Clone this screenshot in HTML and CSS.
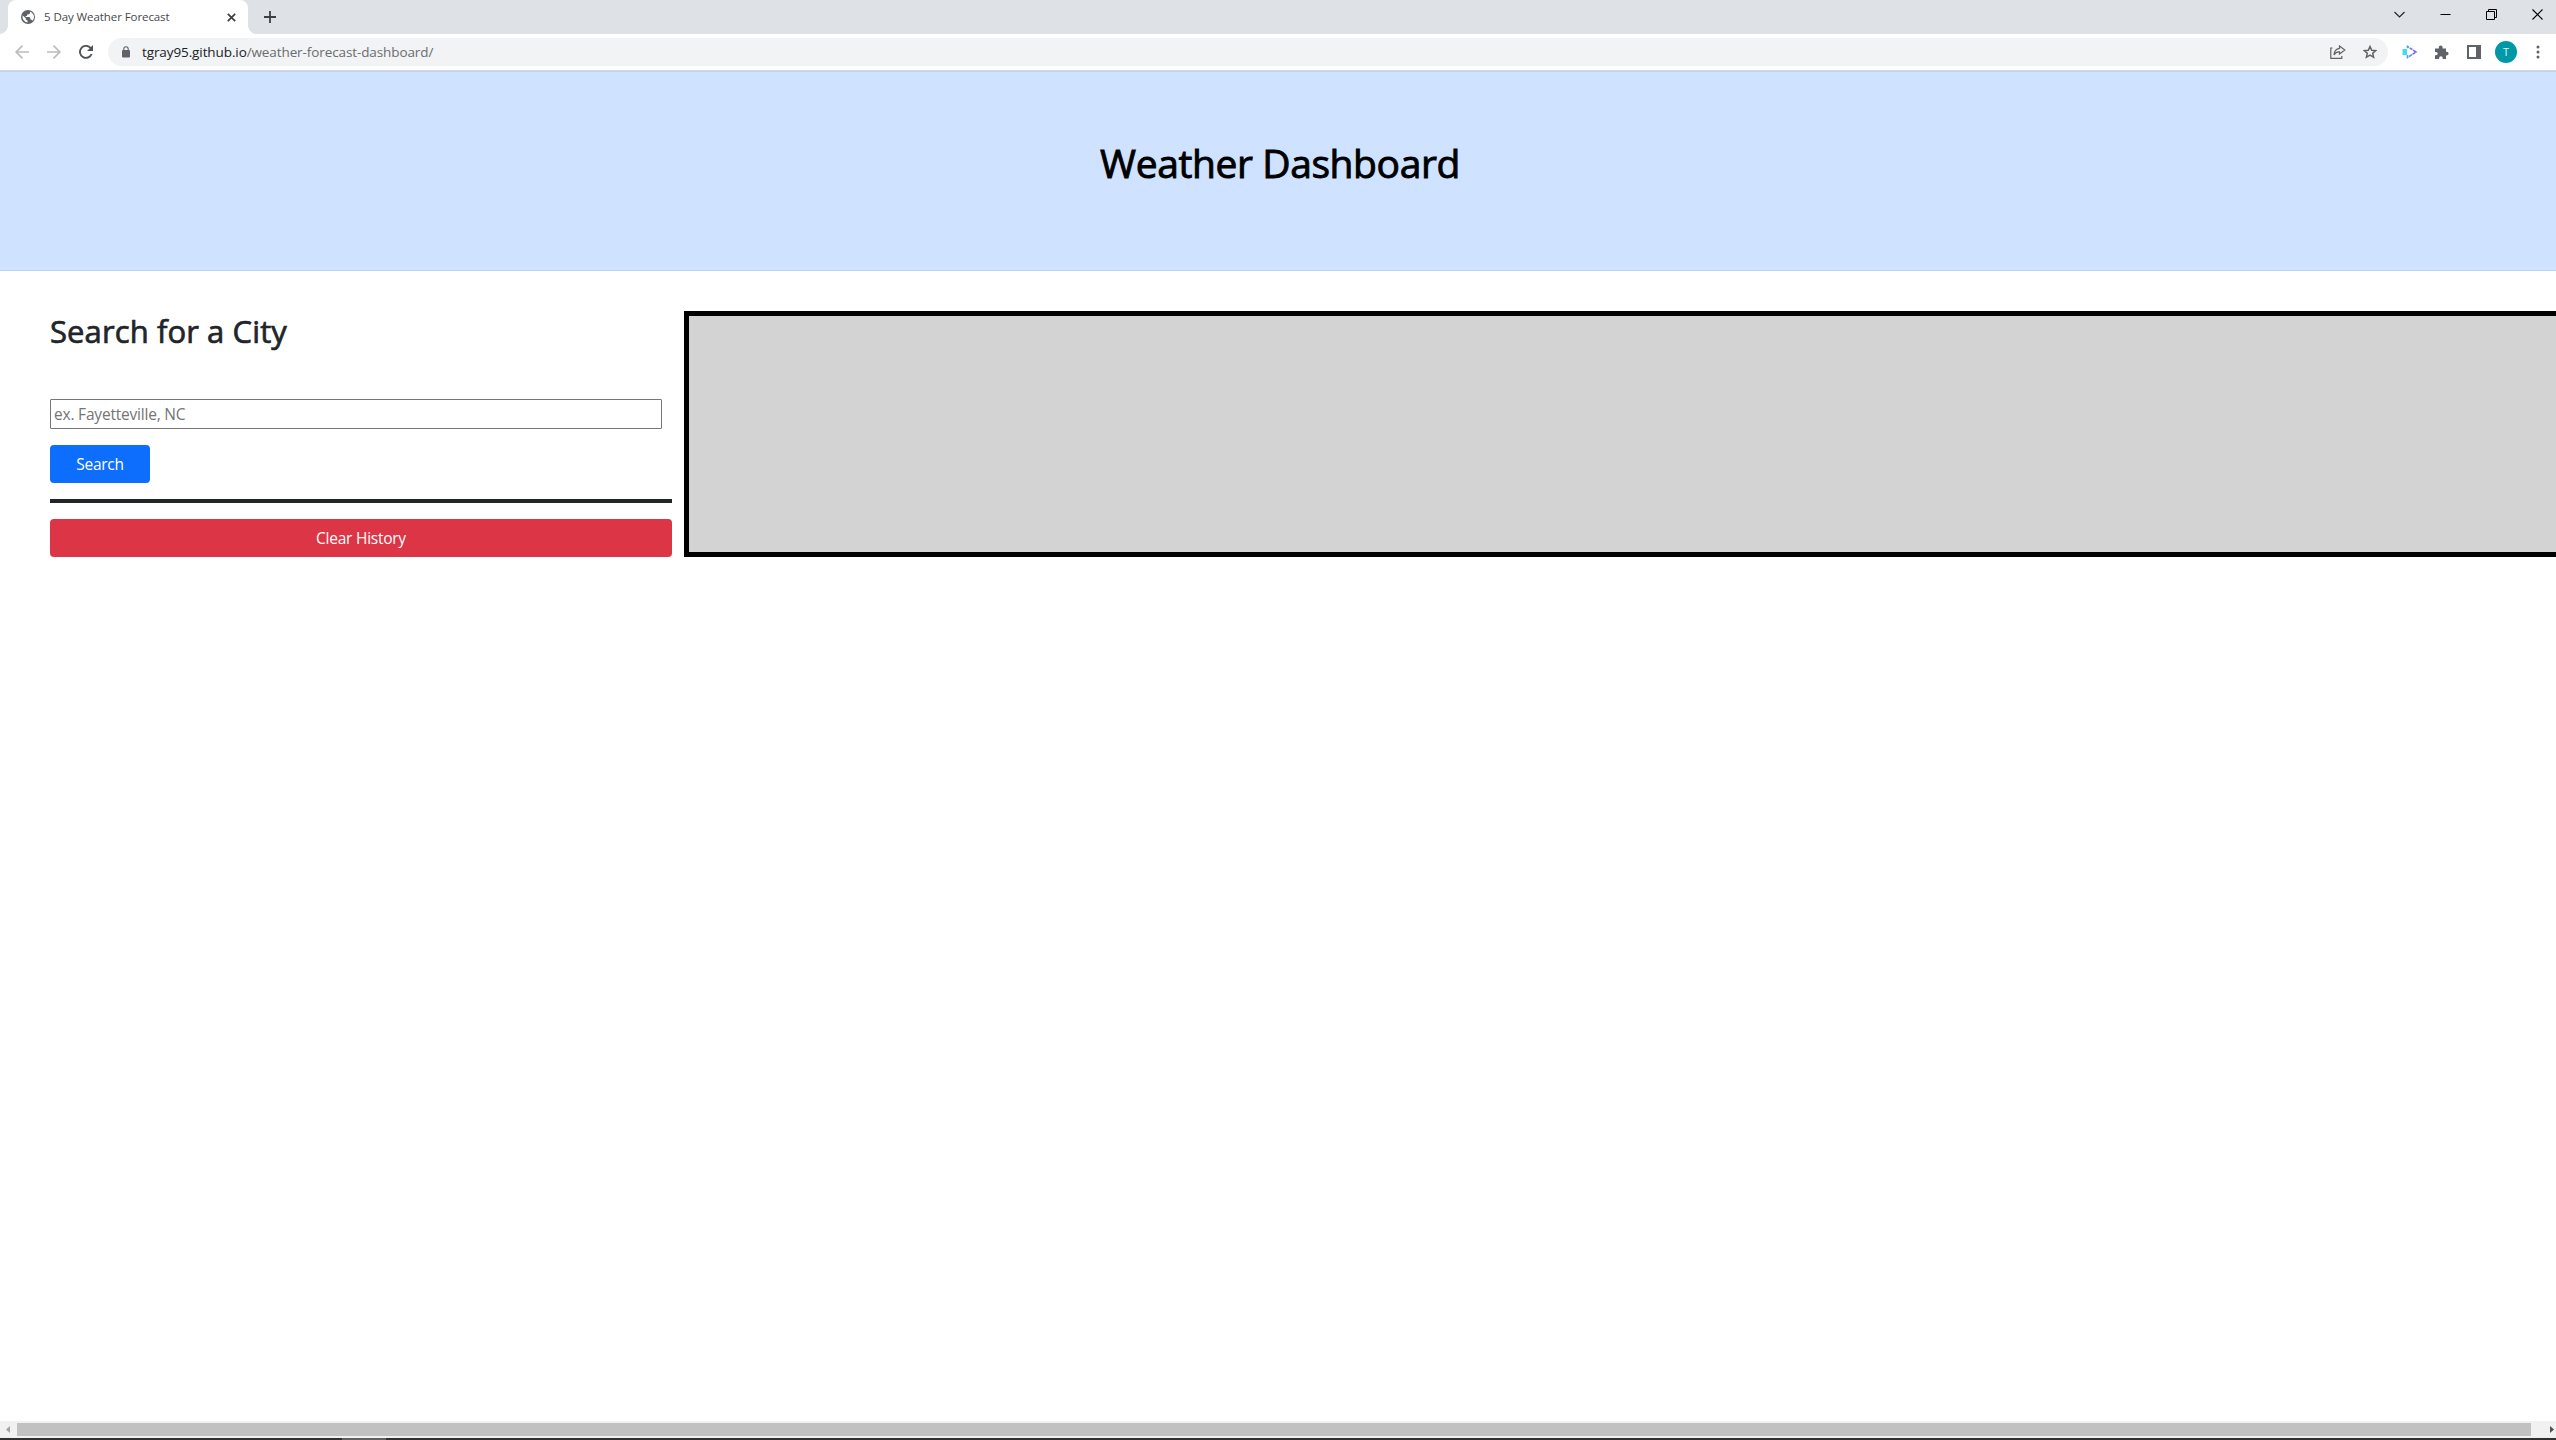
FILE: index.html
```html
<!DOCTYPE html>
<html lang="en">
<head>
<meta charset="utf-8">
<title>5 Day Weather Forecast</title>
<link rel="stylesheet" href="styles.css">
</head>
<body>
<div class="tabstrip">
  <div class="tab">
    <svg class="globe" width="14" height="14" viewBox="0 0 14 14"><circle cx="7" cy="7" r="7" fill="#5f6368"/><path d="M1.700 5.500 4.800 8.200v1.200l1.700 1v2.100A5.600 5.600 0 0 1 1.700 5.500ZM9 1.800v1.500L7.500 4.600H6v1.500H4.700v1h3.700l1 1v1.600h1.400l.8 1a5.500 5.500 0 0 0-2.600-8.900Z" fill="#fff"/></svg>
    <span class="tab-title">5 Day Weather Forecast</span>
    <svg class="tab-close" width="9" height="9" viewBox="0 0 9 9"><path d="m.8.8 7.400 7.400M8.200.8.8 8.200" stroke="#3c4043" stroke-width="1.700"/></svg>
  </div>
  <svg class="new-tab" width="12" height="12" viewBox="0 0 12 12"><path d="M6 0v12M0 6h12" stroke="#3c4043" stroke-width="1.800"/></svg>
  <div class="window-controls">
    <svg width="11" height="11" viewBox="0 0 11 11"><path d="m.5 3 5 5 5-5" fill="none" stroke="#222" stroke-width="1.100"/></svg>
    <svg width="11" height="11" viewBox="0 0 11 11"><path d="M.5 5.500h10" stroke="#000"/></svg>
    <svg width="11" height="11" viewBox="0 0 11 11"><path d="M.5 2.500h8v8h-8zM2.500 2.500v-2h8v8h-2" fill="none" stroke="#000"/></svg>
    <svg width="11" height="11" viewBox="0 0 11 11"><path d="m.5.5 10 10M10.500.5l-10 10" stroke="#000" stroke-width="1.100"/></svg>
  </div>
</div>
<div class="toolbar">
  <div class="nav">
    <svg width="14" height="14" viewBox="0 0 14 14"><path d="M14 7H1.300M7.500.7 1.200 7l6.300 6.300" fill="none" stroke="#babcbe" stroke-width="1.700"/></svg>
    <svg width="14" height="14" viewBox="0 0 14 14"><path d="M0 7h12.700M6.500.7 12.800 7l-6.300 6.300" fill="none" stroke="#babcbe" stroke-width="1.700"/></svg>
    <svg width="14" height="14" viewBox="0 0 14 14"><path d="M12.600 9A6 6 0 1 1 11.300 2.700L12 3.500" fill="none" stroke="#505459" stroke-width="1.900"/><path d="M14 0v6H8Z" fill="#505459"/></svg>
  </div>
  <div class="omnibox">
    <svg class="lock" width="8" height="12" viewBox="0 0 8 12"><rect y="4" width="8" height="7.500" rx="1" fill="#5f6368"/><path d="M1.800 4.500V2.900a2.200 2.200 0 0 1 4.400 0v1.600" fill="none" stroke="#5f6368" stroke-width="1.100"/></svg>
    <span class="url"><b>tgray95.github.io</b>/weather-forecast-dashboard/</span>
    <svg class="share" width="16" height="14" viewBox="0 0 16 14"><path d="M2.500 3H.8v10.400h11V11" fill="none" stroke="#5f6368" stroke-width="1.200"/><path d="M9.500 1 14.800 5l-5.300 4V6.800C7 6.600 5 7.800 4 10c.2-3.600 2-6.200 5.500-6.700Z" fill="none" stroke="#5f6368" stroke-width="1.200"/></svg>
    <svg class="star" width="14" height="14" viewBox="0 0 14 14"><path d="m7 1.500 1.700 3.700 4 .4-3 2.700.9 4L7 10.200l-3.600 2.100.9-4-3-2.700 4-.4Z" fill="none" stroke="#5f6368" stroke-width="1.500"/></svg>
  </div>
  <div class="extensions">
    <svg class="ext" width="16" height="14" viewBox="0 0 16 14"><defs><linearGradient id="beam"><stop stop-color="#4b9af5"/><stop offset="1" stop-color="#8b50ee"/></linearGradient></defs><path d="M.5 4H5v6H.5z" fill="#3bdff5"/><path d="M5.500 10v2.500L14 7 5.500 1.500V4" fill="none" stroke="url(#beam)" stroke-width="1.500" stroke-dasharray="3.500 .7"/></svg>
    <svg class="puzzle" width="15" height="15" viewBox="0 0 15 15"><path d="M1 3.500h3.800V2.300a1.900 1.900 0 0 1 3.800 0v1.200H12v3.300h.8a1.800 1.800 0 0 1 0 3.600H12V14H8.700v-1a1.800 1.800 0 0 0-3.600 0v1H1v-3.700h1a1.700 1.700 0 0 0 0-3.400H1Z" fill="#5f6368"/></svg>
    <svg class="panel-icon" width="14" height="14" viewBox="0 0 14 14"><path d="M1 1h12v12H1z" fill="none" stroke="#5f6368" stroke-width="2"/><path d="M9 0h5v14H9z" fill="#5f6368"/></svg>
    <span class="avatar">T</span>
    <svg class="more" width="4" height="14" viewBox="0 0 4 14"><g fill="#5f6368"><circle cx="2" cy="2" r="1.500"/><circle cx="2" cy="7" r="1.500"/><circle cx="2" cy="12" r="1.500"/></g></svg>
  </div>
</div>
<main class="page">
  <header class="banner"><h1>Weather Dashboard</h1></header>
  <div class="content">
    <section class="search">
      <h2>Search for a City</h2>
      <input class="city" type="text" placeholder="ex. Fayetteville, NC">
      <button class="btn btn-search">Search</button>
      <hr class="rule">
      <button class="btn btn-clear">Clear History</button>
    </section>
    <section class="forecast"></section>
  </div>
</main>
<div class="scrollbar">
  <svg width="17" height="17" viewBox="0 0 17 17"><path d="M10 5v7L6 8.500Z" fill="#a3a3a3"/></svg>
  <div class="thumb"></div>
  <svg class="scroll-right" width="17" height="17" viewBox="0 0 17 17"><path d="M11 5v7l4-3.500Z" fill="#505050"/></svg>
</div>
<div class="taskbar"><div class="task"></div></div>
</body>
</html>
```
FILE: styles.css
```css
* { box-sizing: border-box; }
body {
  margin: 0;
  width: 2556px;
  height: 1440px;
  overflow: hidden;
  display: flex;
  flex-direction: column;
  background: #fff;
  color: #212529;
  font-family: "Open Sans", "Noto Sans", sans-serif;
}
svg { display: block; flex: none; }

.tabstrip { display: flex; height: 34px; padding-left: 8px; background: #dee1e6; flex: none; position: relative; }
.tab { display: flex; align-items: center; width: 240px; height: 34px; padding: 0 12px 0 13px; background: #fff; border-radius: 8px 8px 0 0; position: relative; }
.tab::before, .tab::after { content: ""; position: absolute; bottom: 0; width: 8px; height: 8px; }
.tab::before { left: -8px; background: radial-gradient(circle at 0 0, #dee1e6 7.5px, #fff 8px); }
.tab::after { right: -8px; background: radial-gradient(circle at 100% 0, #dee1e6 7.5px, #fff 8px); }
.tab-title { flex: 1; margin-left: 9px; padding-bottom: 1px; font-size: 11.5px; letter-spacing: -0.08px; color: #45494d; white-space: nowrap; }
.new-tab { margin: 11px 0 0 16px; }
.window-controls { display: flex; gap: 35px; margin: 9px 13px 0 auto; }

.toolbar { display: flex; align-items: center; height: 37px; flex: none; border-bottom: 1px solid #d5d7da; padding-left: 15px; background: #fff; }
.nav { display: flex; gap: 18px; }
.omnibox { display: flex; align-items: center; width: 2280px; height: 28px; margin-left: 15px; padding: 0 11px 0 14px; border-radius: 14px; background: #f1f3f4; }
.url { flex: 1; margin-left: 12px; font-size: 13.5px; letter-spacing: -0.1px; color: #6a6d70; white-space: nowrap; }
.url b { font-weight: 400; color: #202124; }
.star { margin-left: 17px; }
.extensions { display: flex; align-items: center; }
.ext { margin-left: 14px; }
.puzzle { margin-left: 16px; }
.panel-icon { margin-left: 18px; }
.avatar { width: 22px; height: 22px; margin-left: 14px; border-radius: 50%; background: #0097a7; color: #e2f3f5; font-size: 11px; line-height: 22px; text-align: center; }
.more { margin-left: 19px; }

.page { flex: 1; overflow: hidden; }
.banner { height: 200px; border: solid #b6d4fe; border-width: 1px 0; background: #cfe2ff; padding-top: 63px; text-align: center; }
h1 { margin: 0 -4px 0 0; font-size: 39px; line-height: 56px; font-weight: 400; letter-spacing: -0.4px; color: #000; -webkit-text-stroke: 0.9px #000; }
.content { display: flex; gap: 12px; padding: 40px 0 0 50px; }
.search { width: 622px; flex: none; display: flex; flex-direction: column; align-items: flex-start; }
h2 { margin: 0 0 48px; height: 40px; font-size: 31px; line-height: 40px; font-weight: 400; letter-spacing: 0.1px; -webkit-text-stroke: 0.7px #212529; }
.city { width: 612px; height: 30px; border: 1px solid #767676; border-radius: 1px; padding: 0 3px; font: 15.5px/26px "Open Sans", sans-serif; letter-spacing: -0.2px; outline: 0; }
.city::placeholder { color: #757575; opacity: 1; }
.btn { height: 38px; border: 0; border-radius: 4px; color: #fff; font: 15.5px/24px "Open Sans", sans-serif; letter-spacing: -0.25px; padding: 0; }
.btn-search { width: 100px; margin-top: 16px; background: #0d6efd; }
.rule { width: 100%; height: 4px; margin: 16px 0; border: 0; background: #212529; }
.btn-clear { width: 100%; background: #dc3545; }
.forecast { flex: 1; height: 246px; border: 5px solid #000; border-right: 0; background: #d3d3d3; }

.scrollbar { display: flex; height: 17px; flex: none; background: #f1f1f1; }
.thumb { width: 2514px; height: 13px; margin-top: 2px; background: #c1c1c1; }
.scroll-right { margin-left: auto; }
.taskbar { height: 2px; flex: none; background: #302f31; padding-left: 342px; }
.task { width: 44px; height: 2px; background: #626163; }
```
